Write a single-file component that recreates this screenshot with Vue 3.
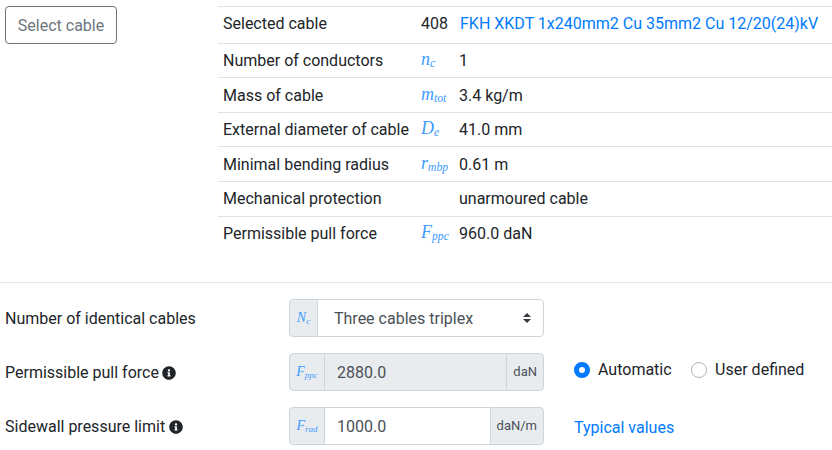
<script setup>
const rows = [
  { label: 'Number of conductors', sym: 'n', sub: 'c', value: '1' },
  { label: 'Mass of cable', sym: 'm', sub: 'tot', value: '3.4 kg/m' },
  { label: 'External diameter of cable', sym: 'D', sub: 'e', value: '41.0 mm' },
  { label: 'Minimal bending radius', sym: 'r', sub: 'mbp', value: '0.61 m' },
  { label: 'Mechanical protection', sym: '', sub: '', value: 'unarmoured cable' },
  { label: 'Permissible pull force', sym: 'F', sub: 'ppc', value: '960.0 daN' }
]
const infoPath = 'M256 8C119.043 8 8 119.083 8 256c0 136.997 111.043 248 248 248s248-111.003 248-248C504 119.083 392.957 8 256 8zm0 110c23.196 0 42 18.804 42 42s-18.804 42-42 42-42-18.804-42-42 18.804-42 42-42zm56 254c0 6.627-5.373 12-12 12h-88c-6.627 0-12-5.373-12-12v-24c0-6.627 5.373-12 12-12h12v-64h-12c-6.627 0-12-5.373-12-12v-24c0-6.627 5.373-12 12-12h64c6.627 0 12 5.373 12 12v100h12c6.627 0 12 5.373 12 12v24z'
</script>

<template>
  <div class="page">
    <section class="top">
      <div class="left">
        <button class="btn" type="button">Select cable</button>
      </div>
      <table class="info">
        <colgroup>
          <col class="c1" />
          <col class="c2" />
          <col />
        </colgroup>
        <tbody>
          <tr class="first">
            <td>Selected cable</td>
            <td colspan="2">
              <span class="num">408</span>
              <a class="link">FKH XKDT 1x240mm2 Cu 35mm2 Cu 12/20(24)kV</a>
            </td>
          </tr>
          <tr v-for="r in rows" :key="r.label">
            <td>{{ r.label }}</td>
            <td class="symcell">
              <span v-if="r.sym" class="math big">{{ r.sym }}<sub>{{ r.sub }}</sub></span>
            </td>
            <td>{{ r.value }}</td>
          </tr>
        </tbody>
      </table>
    </section>

    <hr class="rule" />

    <div class="frow">
      <label class="flabel">Number of identical cables</label>
      <div class="group">
        <span class="addon pre"><span class="math">N<sub>c</sub></span></span>
        <div class="selectwrap">
          <select class="select">
            <option>Three cables triplex</option>
          </select>
          <svg class="caret" viewBox="0 0 4 5" width="8" height="10"><path d="M2 0L0 2h4zm0 5L0 3h4z" fill="#343a40" /></svg>
        </div>
      </div>
    </div>

    <div class="frow">
      <label class="flabel">Permissible pull force
        <svg class="icon" viewBox="0 0 512 512" width="14" height="14"><path :d="infoPath" fill="#212529" /></svg>
      </label>
      <div class="group">
        <span class="addon pre wide"><span class="math">F<sub>ppc</sub></span></span>
        <input class="input disabled" value="2880.0" readonly />
        <span class="addon post">daN</span>
      </div>
      <div class="aside radios">
        <span class="radio"><span class="dot on"></span>Automatic</span>
        <span class="radio"><span class="dot"></span>User defined</span>
      </div>
    </div>

    <div class="frow">
      <label class="flabel">Sidewall pressure limit
        <svg class="icon" viewBox="0 0 512 512" width="14" height="14"><path :d="infoPath" fill="#212529" /></svg>
      </label>
      <div class="group">
        <span class="addon pre wide"><span class="math">F<sub>rad</sub></span></span>
        <input class="input" value="1000.0" readonly />
        <span class="addon post">daN/m</span>
      </div>
      <div class="aside"><a class="link typical">Typical values</a></div>
    </div>
  </div>
</template>

<style>
html, body { margin: 0; background: #fff; overflow: hidden; }
</style>

<style scoped>
.page {
  width: 832px;
  height: 450px;
  box-sizing: border-box;
  padding: 6px 0 0 5px;
  font-family: Roboto, "Liberation Sans", sans-serif;
  font-size: 16px;
  line-height: 24px;
  color: #212529;
  overflow: hidden;
}
.top { display: flex; align-items: flex-start; }
.left { width: 213px; flex: none; }
.btn {
  display: block;
  width: 112px;
  height: 38px;
  padding: 2px 0 0;
  border: 1px solid #6c757d;
  border-radius: 4px;
  background: #fff;
  color: #6c757d;
  font: inherit;
}
.info {
  width: 614px;
  flex: none;
  table-layout: fixed;
  border-collapse: collapse;
  border-top: 1px solid #dee2e6;
}
.c1 { width: 198px; }
.c2 { width: 38px; }
.info td {
  padding: 5.5px 5px 4.1px;
  border-top: 1px solid #dee2e6;
  vertical-align: top;
  white-space: nowrap;
}
.info .first td { padding-top: 4.8px; padding-bottom: 6.8px; }
.info td.symcell { padding-right: 0; padding-left: 5px; }
.num { display: inline-block; width: 39px; }
.link { color: #007bff; text-decoration: none; }
.math {
  font-family: "Liberation Serif", serif;
  font-style: italic;
  color: #3d9bff;
  font-size: 14px;
  line-height: 1;
}
.math.big { font-size: 18px; position: relative; top: -1px; }
.math sub { font-size: 0.65em; line-height: 0; vertical-align: -0.2em; }
.rule {
  margin: 32px 0 16px -5px;
  border: 0;
  border-top: 1px solid #e4e6e9;
  height: 0;
  width: 832px;
}
.frow {
  display: flex;
  align-items: center;
  height: 38px;
  margin-bottom: 16px;
}
.flabel { width: 284px; flex: none; position: relative; top: 1px; }
.icon { vertical-align: -1.5px; margin-left: -0.5px; }
.group {
  display: flex;
  width: 255px;
  height: 38px;
  flex: none;
}
.addon {
  display: flex;
  align-items: center;
  justify-content: center;
  box-sizing: border-box;
  background: #e9ecef;
  border: 1px solid #ced4da;
  color: #495057;
  flex: none;
}
.pre { width: 29px; border-radius: 4px 0 0 4px; }
.pre.wide { width: 36px; }
.post {
  font-size: 13px;
  padding: 0 6px;
  border-radius: 0 4px 4px 0;
  margin-left: -1px;
}
.selectwrap { position: relative; flex: 1; margin-left: -1px; }
.select {
  appearance: none;
  display: block;
  width: 100%;
  height: 38px;
  box-sizing: border-box;
  padding: 2px 24px 0 16px;
  border: 1px solid #ced4da;
  border-radius: 0 4px 4px 0;
  background: #fff;
  color: #495057;
  font: inherit;
  outline: none;
}
.caret { position: absolute; right: 13px; top: 14px; pointer-events: none; }
.input {
  flex: 1;
  min-width: 0;
  height: 38px;
  box-sizing: border-box;
  padding: 0 12px;
  margin-left: -1px;
  border: 1px solid #ced4da;
  background: #fff;
  color: #495057;
  font: inherit;
  outline: none;
}
.input.disabled { background: #e9ecef; }
.aside { margin-left: 30px; }
.typical { position: relative; top: 2px; }
.radios { display: flex; gap: 19.5px; position: relative; top: -2px; }
.radio { display: flex; align-items: center; }
.dot {
  width: 16px;
  height: 16px;
  box-sizing: border-box;
  border: 1px solid #adb5bd;
  border-radius: 50%;
  margin-right: 8px;
  background: #fff;
}
.dot.on { border: 5px solid #007bff; }
</style>
